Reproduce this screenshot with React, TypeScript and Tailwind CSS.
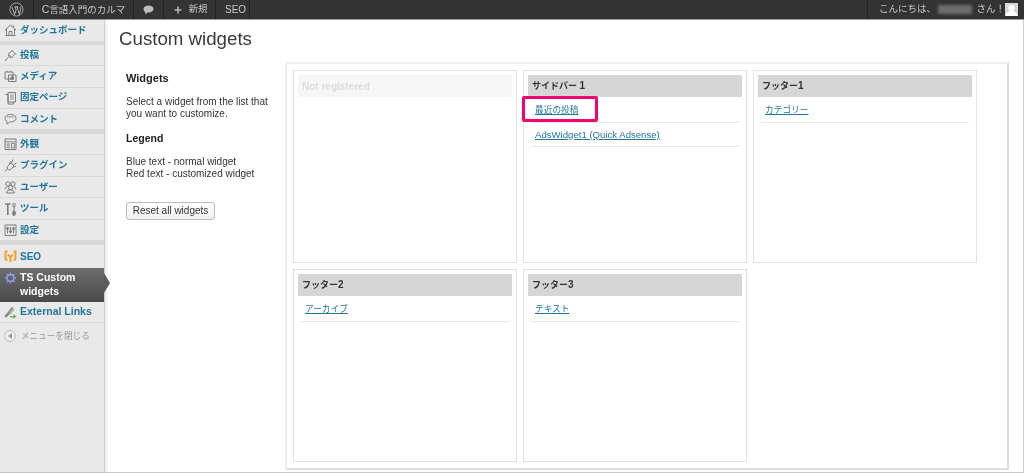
import { Plus } from "lucide-react";
import type { ReactNode } from "react";

const font = "font-['Liberation_Sans','Noto_Sans_CJK_JP',sans-serif]";

function Ico({ children }: { children: ReactNode }) {
  return (
    <svg width="13" height="14" viewBox="0 0 13 14" fill="none" stroke="#7d7d7d" strokeWidth="1" className="shrink-0">
      {children}
    </svg>
  );
}

const icons: Record<string, ReactNode> = {
  dash: (
    <Ico>
      <path d="M1 7L6.5 2L12 7M2.5 6V12.5H10.5V6M9.5 2.5V4.5M5 12.5V8.5H8V12.5M1.5 12.5H11.5" />
    </Ico>
  ),
  post: (
    <Ico>
      <path d="M1 13L5 8.5M7.5 2L12 6.5M8.5 2.8L4.2 5.8L8 9.8L11 5.2M4 7L7 10" />
    </Ico>
  ),
  media: (
    <Ico>
      <path d="M1 3H9V10H1ZM3 3V1.8M6 3V1.8M4.5 6H12V12.5H4.5Z" />
      <circle cx="8.2" cy="9.2" r="1.5" fill="#7d7d7d" />
    </Ico>
  ),
  page: (
    <Ico>
      <path d="M1.5 3.5H4V13H9.5V11M4 1.5H11.5V11H4Z" />
      <path d="M6 4H10M6 6H10M6 8H10" strokeWidth="0.8" />
    </Ico>
  ),
  comment: (
    <Ico>
      <path d="M6.5 2.5C9.8 2.5 12 4 12 6.3S9.8 10 6.5 10H5.5L3 12.2V9.5C1.8 8.8 1 7.6 1 6.3 1 4 3.2 2.5 6.5 2.5Z" />
      <path d="M3 5H10" strokeWidth="0.8" />
    </Ico>
  ),
  look: (
    <Ico>
      <path d="M1 2H12V12.5H1Z" />
      <path d="M1 4.8H12M2.5 7H6M2.5 8.8H6M2.5 10.6H6M7.5 6.5H10.5V11H7.5Z" strokeWidth="0.9" />
    </Ico>
  ),
  plugin: (
    <Ico>
      <path d="M1 13.5L3.5 10.5M3 9L7 5L10 8L6 12Q4.5 12 3.5 11Q3 10 3 9ZM7 3L5.5 6M12 8L8.5 9.5M9 1.5L7.5 5M12.5 5L9.5 6.5" />
    </Ico>
  ),
  user: (
    <Ico>
      <circle cx="4" cy="4" r="2.2" />
      <circle cx="9" cy="4" r="2.2" />
      <circle cx="6.5" cy="7.5" r="2.2" />
      <path d="M1 9.5Q1 7.5 3 7M12 9.5Q12 7.5 10 7M2.5 13Q2.5 9.8 6.5 9.8T10.5 13Z" />
    </Ico>
  ),
  tool: (
    <Ico>
      <path d="M1 2H6.5M3.8 2V13" strokeWidth="1.6" />
      <path d="M9 1V4Q9 5.5 10 5.5T11 4V1M10 5.5V9" />
      <rect x="8.8" y="9" width="2.4" height="4.4" rx="1" fill="#7d7d7d" />
    </Ico>
  ),
  set: (
    <Ico>
      <path d="M1 2H12V12.5H1Z" />
      <path d="M3.5 4V10.5M6.5 4V10.5M9.5 4V10.5" strokeWidth="1" />
      <circle cx="3.5" cy="5.5" r="1.1" fill="#7d7d7d" />
      <circle cx="6.5" cy="8.5" r="1.1" fill="#7d7d7d" />
      <circle cx="9.5" cy="5.5" r="1.1" fill="#7d7d7d" />
    </Ico>
  ),
  link: (
    <svg width="13" height="14" viewBox="0 0 13 14" fill="none" className="shrink-0">
      <path d="M2 11L5 8M5 8L8 3.5" stroke="#8a8a8a" strokeWidth="2.6" strokeLinecap="round" />
      <path d="M9 4.5L6.5 8" stroke="#b5b5b5" strokeWidth="2.2" strokeLinecap="round" />
      <path d="M6 11H9.5V9L12.5 11.5L9.5 14V12.5H6Z" fill="#6db04a" />
    </svg>
  ),
};

function MenuItem({ label, icon, h, size = "text-[9.5px]", lift }: { label: string; icon: string; h: string; size?: string; lift?: boolean }) {
  return (
    <div className={`flex items-center gap-[3px] pl-[4px] border-b border-[#d9d9d9] ${h}`}>
      {icons[icon]}
      <span className={`${size} font-bold text-[#21759b] whitespace-nowrap ${lift ? "-mt-[1px]" : ""}`}>{label}</span>
    </div>
  );
}

function Sep() {
  return <div className="h-[3.5px] bg-[#d8d8d8]" />;
}

function Row({ label, highlight, latin }: { label: string; highlight?: boolean; latin?: boolean }) {
  return (
    <div className={`relative h-[24.5px] pt-[1px] border-b-[1.5px] border-[#e8e8e8] flex items-center pl-[4px] text-[#21759b] underline whitespace-nowrap ${latin ? "text-[9.6px]" : "text-[8.7px]"}`}>
      {label}
      {highlight && <div className="absolute left-[-9px] top-[-2px] w-[76px] h-[26px] border-[3px] border-[#f0046e] rounded-[2px]" />}
    </div>
  );
}

function Card({ title, num, children }: { title: string; num: string; children: ReactNode }) {
  return (
    <div className="w-[224px] h-[193px] border border-[#e2e2e2] bg-white px-[3px] pt-[4px]">
      <div className="h-[22px] bg-[#d6d6d6] flex items-center pl-[4px] mx-[1px] text-[9px] font-bold text-[#333] whitespace-pre">
        <span>
          {title}
          <span className="text-[10px]">{num}</span>
        </span>
      </div>
      <div className="px-[4px] pt-[1px]">{children}</div>
    </div>
  );
}

export default function App() {
  return (
    <div className={`w-[1024px] h-[473px] overflow-hidden flex flex-col bg-white ${font} blur-[0.45px]`}>
      <div className="h-[20px] bg-[#333333] border-b border-[#9a9a9a] flex items-stretch text-[9.5px] text-[#c8c8c8] shrink-0">
        <div className="w-[34px] flex items-center justify-center border-r border-[#222]">
          <svg width="15" height="15" viewBox="0 0 16 16">
            <circle cx="8" cy="8" r="7" fill="none" stroke="#aaa" strokeWidth="1" />
            <path d="M3.2 5.2 L6 13 L7.6 8.6 L6.6 5.2 M6 5.2 H9.8 M8.6 5.2 L11 13 L12.6 7.6 Q13 6 11.8 5" fill="none" stroke="#aaa" strokeWidth="1.1" />
          </svg>
        </div>
        <div className="w-[100px] flex items-center justify-center border-r border-[#222]">
          <span className="whitespace-nowrap">
            <span className="text-[10.5px]">C</span>言語入門のカルマ
          </span>
        </div>
        <div className="w-[30px] flex items-center justify-center border-r border-[#222]">
          <svg width="11" height="10" viewBox="0 0 12 11"><path d="M6 0.5C9 0.5 11.5 2 11.5 4.4S9 8.3 6 8.3H5L2.4 10.4V7.7C1.2 7 .5 5.8 .5 4.4.5 2 3 .5 6 .5Z" fill="#bbb" /></svg>
        </div>
        <div className="w-[52px] flex items-center justify-center gap-[5px] pl-[2px] border-r border-[#222]">
          <Plus size={10} strokeWidth={3.5} className="text-[#bbb]" />
          <span>新規</span>
        </div>
        <div className="w-[34px] flex items-center pl-[9px] border-r border-[#222] text-[10px]">SEO</div>
        <div className="flex-1" />
        <div className="flex items-center pr-[6px] border-l border-[#222] pl-[11px] w-[157px]">
          <span className="whitespace-nowrap w-[59px]">こんにちは、</span>
          <span className="w-[34px] h-[9px] bg-[#6e6e6e] blur-[1.5px]" />
          <span className="whitespace-nowrap ml-[5px]">さん！</span>
          <div className="w-[13px] h-[13px] bg-[#d8d8d8] flex items-end justify-center overflow-hidden ml-auto">
            <svg width="11" height="12" viewBox="0 0 11 12"><circle cx="5.5" cy="4" r="3" fill="#fff" /><path d="M0 12C0 8 3 7 5.5 7S11 8 11 12Z" fill="#fff" /></svg>
          </div>
        </div>
      </div>

      <div className="flex flex-1 min-h-0 border-r border-b border-[#cccccc]">
        <div className="w-[105px] shrink-0 bg-[#e9e9e9] border-r border-[#cfcfcf] shadow-[1px_0_3px_rgba(0,0,0,0.12)] relative">
          <MenuItem label="ダッシュボード" icon="dash" h="h-[21.5px]" lift />
          <Sep />
          <MenuItem label="投稿" icon="post" h="h-[21.25px]" lift />
          <MenuItem label="メディア" icon="media" h="h-[21.25px]" lift />
          <MenuItem label="固定ページ" icon="page" h="h-[21.25px]" lift />
          <MenuItem label="コメント" icon="comment" h="h-[21.25px]" />
          <Sep />
          <MenuItem label="外観" icon="look" h="h-[21.6px]" />
          <MenuItem label="プラグイン" icon="plugin" h="h-[21.6px]" />
          <MenuItem label="ユーザー" icon="user" h="h-[21.6px]" />
          <MenuItem label="ツール" icon="tool" h="h-[21.6px]" />
          <MenuItem label="設定" icon="set" h="h-[21.6px]" />
          <Sep />
          <div className="h-[23px] flex items-center gap-[3px] pl-[4px]">
            <svg width="13" height="13" viewBox="0 0 13 13" className="shrink-0"><path d="M3.5 1.5H1.5V8Q1.5 10 3.5 10M9.5 1.5H11.5V8Q11.5 10 9.5 10M4 4.5L6.5 7.5L9 4.5M6.5 7.5V12" fill="none" stroke="#f0a030" strokeWidth="2" /></svg>
            <span className="text-[10px] font-bold text-[#21759b]">SEO</span>
          </div>
          <div className="relative h-[34px] bg-gradient-to-b from-[#6d6d6d] to-[#4a4a4a] flex items-start gap-[3px] pl-[4px] pt-[2px]">
            <svg width="13" height="14" viewBox="0 0 13 14" fill="none" className="shrink-0 mt-[1px]">
              <circle cx="6.5" cy="7" r="3.4" stroke="#8f9cf0" strokeWidth="1.6" />
              <path d="M6.5 1.5V3M6.5 11V12.5M1 7H2.5M10.5 7H12M2.6 3.1L3.7 4.2M9.3 9.8L10.4 10.9M10.4 3.1L9.3 4.2M3.7 9.8L2.6 10.9" stroke="#8f9cf0" strokeWidth="1.4" />
            </svg>
            <span className="text-[10.5px] leading-[14px] font-bold text-white">TS Custom<br />widgets</span>
            <div className="absolute right-[-6px] top-[5px] w-0 h-0 border-y-[10px] border-y-transparent border-l-[6px] border-l-[#5a5a5a]" />
          </div>
          <MenuItem label="External Links" icon="link" h="h-[21.5px]" size="text-[10.5px]" />
          <div className="flex items-center gap-[5px] pl-[4px] h-[25px] pt-[1px]">
            <div className="w-[12px] h-[12px] rounded-full border border-[#bbb] bg-[#eee] flex items-center justify-center">
              <div className="w-0 h-0 border-y-[3px] border-y-transparent border-r-[4px] border-r-[#999]" />
            </div>
            <span className="text-[8.6px] text-[#999] whitespace-nowrap">メニューを閉じる</span>
          </div>
        </div>

        <div className="flex-1 pl-[14px] min-w-0">
          <h1 className="text-[18.7px] leading-[24px] text-[#3a3a3a] pt-[7px] h-[42px]">Custom widgets</h1>
          <div className="flex">
            <div className="w-[166px] shrink-0 pl-[7px] pt-[10px] text-[10px] leading-[12px] text-[#333]">
              <div className="text-[11px] font-bold text-[#222] mb-[12px]">Widgets</div>
              <div>Select a widget from the list that<br />you want to customize.</div>
              <div className="text-[10.5px] font-bold text-[#222] mt-[12px] mb-[12px]">Legend</div>
              <div>Blue text - normal widget<br />Red text - customized widget</div>
              <button className="mt-[22px] h-[18px] w-[89px] rounded-[3px] border border-[#bbb] bg-gradient-to-b from-white to-[#f0f0f0] text-[10px] text-[#333]">Reset all widgets</button>
            </div>
            <div className="w-[724px] h-[408px] border-2 border-t-[#efefef] border-l-[#efefef] border-r-[#dedede] border-b-[#dedede] pl-[6px] pt-[6px] flex flex-wrap content-start gap-x-[6px] gap-y-[6px] bg-white">
              <div className="w-[224px] h-[193px] border border-[#e2e2e2] px-[3px] pt-[4px]">
                <div className="h-[22px] mx-[1px] bg-[#f6f6f6] flex items-center pl-[4px] text-[10px] text-[#dcdcdc] font-bold">Not registered</div>
              </div>
              <Card title="サイドバー " num="1">
                <Row label="最近の投稿" highlight />
                <Row label="AdsWidget1 (Quick Adsense)" latin />
              </Card>
              <Card title="フッター" num="1"><Row label="カテゴリー" /></Card>
              <Card title="フッター" num="2"><Row label="アーカイブ" /></Card>
              <Card title="フッター" num="3"><Row label="テキスト" /></Card>
            </div>
          </div>
        </div>
      </div>
    </div>
  );
}
